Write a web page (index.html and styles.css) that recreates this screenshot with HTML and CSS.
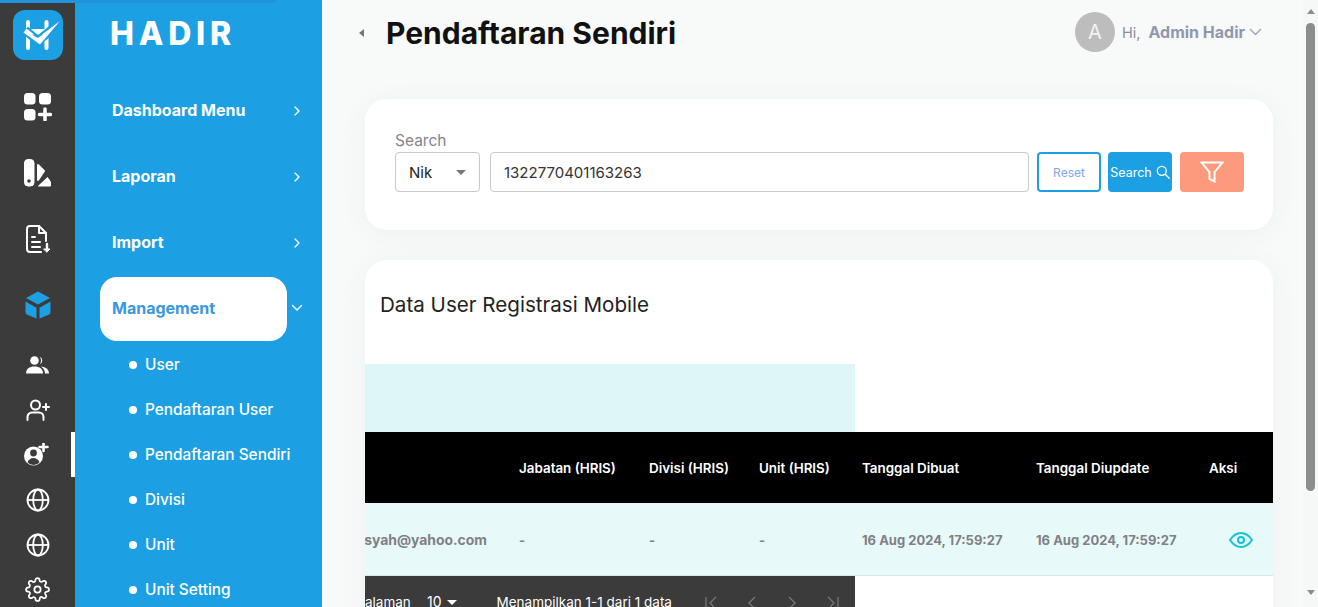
FILE: index.html
```html
<!DOCTYPE html>
<html lang="en">
<head>
  <meta charset="UTF-8">
  <title>Pendaftaran Sendiri</title>
  <link rel="stylesheet" href="styles.css">
</head>
<body>
  <div class="top-progress"></div>
  <div class="app">
    <!-- Icon rail -->
    <nav class="rail">
      <div class="rail-logo">
        <svg width="50" height="50" viewBox="0 0 50 50">
          <rect width="50" height="50" rx="12" fill="#1ca0e3"/>
          <path d="M15 12v26M33.500 12v26" stroke="#fff" stroke-width="4" stroke-linecap="round" fill="none"/>
          <path d="M15 19h18v6H15z" fill="#fff"/>
          <path d="M12 20l13 11 23-19" stroke="#1ca0e3" stroke-width="9" fill="none"/>
          <path d="M10.500 22.500l3-4 11.500 9 22-16.500-20 23.500z" fill="#fff"/>
          <path d="M19 24.500h11l-5.500 3.500z" fill="#1ca0e3"/>
        </svg>
      </div>
      <div class="rail-item tall">
        <svg width="28" height="28" viewBox="0 0 28 28" fill="#fff"><rect x="0" y="0" width="11.500" height="11.500" rx="3.500"/><rect x="15" y="0" width="12" height="11.500" rx="3.500"/><rect x="0" y="16" width="11.500" height="11.500" rx="3.500"/><path d="M21 16v11M15.500 21.500h11" stroke="#fff" stroke-width="3.500" stroke-linecap="round"/></svg>
      </div>
      <div class="rail-item tall">
        <svg width="28" height="28" viewBox="0 0 28 28" fill="#fff" stroke="#fff" stroke-linejoin="round"><rect x="0.500" y="0.500" width="9.500" height="26.500" rx="3.500"/><circle cx="5" cy="22" r="1.800" fill="#3b3b3b" stroke="none"/><path d="M14 6l6 6-6 9z" stroke-width="2"/><path d="M14.500 27l9-8.500 3 4.500v4z" stroke-width="1"/></svg>
      </div>
      <div class="rail-item tall">
        <svg width="26" height="28" viewBox="0 0 26 28" fill="none" stroke="#fff" stroke-width="2" stroke-linecap="round" stroke-linejoin="round"><path d="M14 1H5a3 3 0 0 0-3 3v20a3 3 0 0 0 3 3h11"/><path d="M14 1l7 7v8"/><path d="M14 2v6h7M7 12h3M7 17h8M7 22h8"/><path d="M22 19v6" stroke-width="2.400"/><path d="M19 24h6l-3 3z" fill="#fff" stroke-width="1"/></svg>
      </div>
      <div class="rail-item tall">
        <svg width="26" height="28" viewBox="0 0 26 28" fill="#1ca0e3"><path d="M13 .5l12 6.500-12 6.500L1 7z"/><path d="M.5 10.500l11 6.200V27.500l-8.500-3.500a3 3 0 0 1-2.500-3z"/><path d="M25.500 10.500l-11 6.200V27.500l8.500-3.500a3 3 0 0 0 2.500-3z"/></svg>
      </div>
      <div class="rail-item short">
        <svg width="23" height="18" viewBox="0 0 23 18" fill="#fff"><circle cx="8.500" cy="4.500" r="4.300"/><path d="M0 17.500c0-4.500 3.300-7 8.500-7s8.500 2.500 8.500 7z"/><path d="M13.500.5a4.300 4.300 0 0 1 0 8 6 6 0 0 0 0-8z"/><path d="M15 10.500c4.500.3 8 2.800 8 7h-4c0-3-1.500-5.300-4-7z"/></svg>
      </div>
      <div class="rail-item short">
        <svg width="24" height="22" viewBox="0 0 24 22" fill="none" stroke="#fff" stroke-width="2" stroke-linecap="round"><circle cx="9.500" cy="6" r="4.500"/><path d="M1.500 21v-3a4.500 4.500 0 0 1 4.500-4.500h7a4.500 4.500 0 0 1 4.500 4.500v3"/><path d="M20 5v6M17 8h6"/></svg>
      </div>
      <div class="rail-item short active">
        <svg width="28" height="24" viewBox="0 0 28 24"><circle cx="9.500" cy="13" r="9.500" fill="#fff"/><circle cx="9.500" cy="10" r="3.400" fill="#3b3b3b"/><path d="M3.500 19.500c1-3 3.300-4.500 6-4.500s5 1.500 6 4.500a8.500 8.500 0 0 1-12 0z" fill="#3b3b3b"/><path d="M19.500 0v8M15.500 4h8" stroke="#fff" stroke-width="2.600" stroke-linecap="round"/></svg>
      </div>
      <div class="rail-item short">
        <svg width="24" height="24" viewBox="0 0 24 24" fill="none" stroke="#fff" stroke-width="1.800"><circle cx="12" cy="12" r="10.500"/><ellipse cx="12" cy="12" rx="4.800" ry="10.500"/><path d="M1.500 12h21"/></svg>
      </div>
      <div class="rail-item short">
        <svg width="24" height="24" viewBox="0 0 24 24" fill="none" stroke="#fff" stroke-width="1.800"><circle cx="12" cy="12" r="10.500"/><ellipse cx="12" cy="12" rx="4.800" ry="10.500"/><path d="M1.500 12h21"/></svg>
      </div>
      <div class="rail-item short">
        <svg width="25" height="25" viewBox="0 0 24 24" fill="none" stroke="#fff" stroke-width="1.700" stroke-linecap="round" stroke-linejoin="round"><circle cx="12" cy="12" r="3"/><path d="M19.400 15a1.650 1.650 0 0 0 .33 1.820l.06.06a2 2 0 0 1 0 2.830 2 2 0 0 1-2.830 0l-.06-.06a1.650 1.650 0 0 0-1.820-.33 1.650 1.650 0 0 0-1 1.510V21a2 2 0 0 1-2 2 2 2 0 0 1-2-2v-.09A1.650 1.650 0 0 0 9 19.400a1.650 1.650 0 0 0-1.820.33l-.06.06a2 2 0 0 1-2.830 0 2 2 0 0 1 0-2.830l.06-.06a1.650 1.650 0 0 0 .33-1.820 1.650 1.650 0 0 0-1.510-1H3a2 2 0 0 1-2-2 2 2 0 0 1 2-2h.09A1.650 1.650 0 0 0 4.600 9a1.650 1.650 0 0 0-.33-1.820l-.06-.06a2 2 0 0 1 0-2.830 2 2 0 0 1 2.830 0l.06.06a1.650 1.650 0 0 0 1.820.33H9a1.650 1.650 0 0 0 1-1.510V3a2 2 0 0 1 2-2 2 2 0 0 1 2 2v.09a1.650 1.650 0 0 0 1 1.510 1.650 1.650 0 0 0 1.820-.33l.06-.06a2 2 0 0 1 2.830 0 2 2 0 0 1 0 2.830l-.06.06a1.650 1.650 0 0 0-.33 1.820V9a1.650 1.650 0 0 0 1.510 1H21a2 2 0 0 1 2 2 2 2 0 0 1-2 2h-.09a1.650 1.650 0 0 0-1.510 1z"/></svg>
      </div>
    </nav>

    <!-- Menu -->
    <aside class="sidebar">
      <div class="brand">HADIR</div>
      <div class="menu-item">
        <span>Dashboard Menu</span>
        <svg class="chev" width="8" height="12" viewBox="0 0 8 12"><path d="M2 2l4 4-4 4"/></svg>
      </div>
      <div class="menu-item">
        <span>Laporan</span>
        <svg class="chev" width="8" height="12" viewBox="0 0 8 12"><path d="M2 2l4 4-4 4"/></svg>
      </div>
      <div class="menu-item">
        <span>Import</span>
        <svg class="chev" width="8" height="12" viewBox="0 0 8 12"><path d="M2 2l4 4-4 4"/></svg>
      </div>
      <div class="menu-item open">
        <span class="menu-pill">Management</span>
        <svg class="chev" width="12" height="8" viewBox="0 0 12 8"><path d="M1.500 1.500L6 6l4.500-4.500"/></svg>
      </div>
      <ul class="submenu">
        <li>User</li>
        <li>Pendaftaran User</li>
        <li>Pendaftaran Sendiri</li>
        <li>Divisi</li>
        <li>Unit</li>
        <li>Unit Setting</li>
      </ul>
    </aside>

    <main class="content">
      <header class="topbar">
        <div class="collapse-arrow"></div>
        <h1 class="page-title">Pendaftaran Sendiri</h1>
        <div class="profile">
          <div class="avatar">A</div>
          <span class="hi">Hi,</span>
          <span class="profile-name">Admin Hadir</span>
          <svg class="profile-caret" width="13" height="8" viewBox="0 0 13 8"><path d="M1 1l5.500 5.500L12 1"/></svg>
        </div>
      </header>

      <section class="card search-card">
        <label class="search-label">Search</label>
        <div class="search-row">
          <div class="select">
            <span>Nik</span>
            <span class="select-caret"></span>
          </div>
          <div class="text-input">1322770401163263</div>
          <button class="btn btn-reset">Reset</button>
          <button class="btn btn-search">
            Search
            <svg width="14" height="14" viewBox="0 0 14 14" fill="none" stroke="#fff" stroke-width="1.300" stroke-linecap="round"><circle cx="5.800" cy="5.800" r="4.500"/><path d="M9.200 9.200l4 4"/></svg>
          </button>
          <button class="btn btn-filter">
            <svg width="24" height="22" viewBox="0 0 24 22" fill="none" stroke="#fff" stroke-width="2"><path d="M1.500 1.500h21l-8 9.500v9.500l-5-2.500v-7z"/></svg>
          </button>
        </div>
      </section>

      <section class="card table-card">
        <h2 class="table-title">Data User Registrasi Mobile</h2>
        <div class="teal-band"></div>
        <div class="data-row head">
          <div class="col col-email"></div>
          <div class="col col-jabatan">Jabatan (HRIS)</div>
          <div class="col col-divisi">Divisi (HRIS)</div>
          <div class="col col-unit">Unit (HRIS)</div>
          <div class="col col-date">Tanggal Dibuat</div>
          <div class="col col-date">Tanggal Diupdate</div>
          <div class="col col-aksi">Aksi</div>
        </div>
        <div class="data-row body">
          <div class="col col-email"><span>syah@yahoo.com</span></div>
          <div class="col col-jabatan">-</div>
          <div class="col col-divisi">-</div>
          <div class="col col-unit">-</div>
          <div class="col col-date">16 Aug 2024, 17:59:27</div>
          <div class="col col-date">16 Aug 2024, 17:59:27</div>
          <div class="col col-aksi">
            <svg width="24" height="16" viewBox="0 0 24 16" fill="none" stroke="#12c4d8" stroke-width="2"><path d="M1 8c3-4.500 6.500-7 11-7s8 2.500 11 7c-3 4.500-6.500 7-11 7S4 12.500 1 8z"/><circle cx="12" cy="8" r="3"/></svg>
          </div>
        </div>
        <div class="pager">
          <span class="pager-label">alaman</span>
          <span class="pager-size">10</span>
          <span class="pager-caret"></span>
          <span class="pager-info">Menampilkan 1-1 dari 1 data</span>
          <div class="pager-icons">
            <svg width="16" height="14" viewBox="0 0 16 14"><path d="M2 1v12M12 1L6 7l6 6"/></svg>
            <svg width="16" height="14" viewBox="0 0 16 14"><path d="M11 1L5 7l6 6"/></svg>
            <svg width="16" height="14" viewBox="0 0 16 14"><path d="M5 1l6 6-6 6"/></svg>
            <svg width="16" height="14" viewBox="0 0 16 14"><path d="M4 1l6 6-6 6M14 1v12"/></svg>
          </div>
        </div>
      </section>
    </main>

    <!-- Browser scrollbar -->
    <div class="scrollbar">
      <span class="scroll-up"></span>
      <div class="scroll-thumb"></div>
      <span class="scroll-down"></span>
    </div>
  </div>
</body>
</html>
```

FILE: styles.css
```css
* {
  box-sizing: border-box;
}

html, body {
  margin: 0;
  height: 100%;
  overflow: hidden;
}

body {
  font-family: "Inter", "Noto Sans", sans-serif;
  color: #222;
  background: #f8fafa;
}

.top-progress {
  position: fixed;
  top: 0;
  left: 0;
  width: 276px;
  height: 3px;
  background: #2193dc;
  z-index: 5;
}

.app {
  display: flex;
  height: 607px;
  overflow: hidden;
}

/* Icon rail */
.rail {
  flex: 0 0 75px;
  background: #3b3b3b;
  display: flex;
  flex-direction: column;
  align-items: center;
  padding-top: 10px;
  overflow: hidden;
}

.rail-logo {
  flex: none;
  height: 64px;
}

.rail-item {
  width: 100%;
  display: flex;
  align-items: center;
  justify-content: center;
  flex: none;
}

.rail-item.tall {
  height: 66px;
}

.rail-item.short {
  height: 45px;
}

.rail-item.tall + .rail-item.short {
  margin-top: 4px;
}

.rail-item.active {
  border-right: 4px solid #fff;
  padding-left: 4px;
}

/* Sidebar */
.sidebar {
  flex: 0 0 247px;
  background: #1ca0e3;
  color: #fff;
  padding-left: 25px;
}

.brand {
  height: 77px;
  padding: 15px 0 0 10px;
  font-size: 32px;
  line-height: 38px;
  font-weight: 800;
  letter-spacing: 4.800px;
}

.menu-item {
  height: 66px;
  display: flex;
  align-items: center;
  padding-left: 12px;
  font-size: 16px;
  font-weight: 700;
}

.menu-item > span {
  flex: 0 0 181px;
}

.chev {
  margin-top: 2px;
  fill: none;
  stroke: #fff;
  stroke-width: 1.300;
  stroke-linecap: round;
  stroke-linejoin: round;
}

.menu-item.open {
  padding-left: 0;
}

.menu-item.open > .menu-pill {
  flex: 0 0 187px;
  height: 64px;
  margin-top: 2px;
  padding: 0 0 2px 12px;
  display: flex;
  align-items: center;
  background: #fff;
  color: #3a97e0;
  border-radius: 17px;
}

.menu-item.open .chev {
  margin: 0 0 0 4px;
}

.submenu {
  list-style: none;
  margin: 0;
  padding: 1px 0 0 30px;
}

.submenu li {
  height: 45px;
  display: flex;
  align-items: center;
  font-size: 15.400px;
  font-weight: 500;
}

.submenu li::before {
  content: "";
  width: 8px;
  height: 8px;
  border-radius: 50%;
  background: #fff;
  margin-right: 8px;
  margin-left: -1px;
}

/* Main content */
.content {
  flex: 1;
  min-width: 0;
  padding: 0 30px 0 43px;
}

.topbar {
  height: 66px;
  display: flex;
  align-items: center;
}

.collapse-arrow {
  width: 0;
  height: 0;
  margin-left: -6px;
  border: 4px solid transparent;
  border-left: 0;
  border-right: 5px solid #777;
}

.page-title {
  margin: 0 0 0 22px;
  font-size: 30px;
  font-weight: 700;
  color: #111;
}

.profile {
  margin: 0 11px 2px auto;
  display: flex;
  align-items: center;
  color: #8f98ac;
  font-size: 16px;
}

.avatar {
  width: 40px;
  height: 40px;
  border-radius: 50%;
  background: #bdbdbd;
  color: #f3f3f3;
  font-size: 20px;
  display: flex;
  align-items: center;
  justify-content: center;
  margin-right: 7px;
}

.hi {
  color: #8d8d99;
  font-size: 14.500px;
  margin-right: 8px;
}

.profile-name {
  font-weight: 700;
}

.profile-caret {
  margin-left: 4px;
  fill: none;
  stroke: #9aa3b5;
  stroke-width: 1.300;
}

.card {
  background: #fff;
  border-radius: 22px;
  box-shadow: 0 4px 28px rgba(60, 70, 80, 0.05);
}

.search-card {
  margin-top: 33px;
  height: 131px;
  padding: 31px 29px 0 30px;
}

.search-label {
  display: block;
  font-size: 15.500px;
  line-height: 22px;
  color: #85858a;
}

.search-row {
  display: flex;
  height: 40px;
}

.select {
  width: 85px;
  border: 1px solid #c9c9c9;
  border-radius: 4px;
  display: flex;
  align-items: center;
  justify-content: space-between;
  padding: 0 13px;
  font-size: 15px;
  margin-right: 10px;
}

.select-caret {
  width: 0;
  height: 0;
  border: 5px solid transparent;
  border-bottom: 0;
  border-top: 5px solid #777;
}

.text-input {
  width: 539px;
  border: 1px solid #c9c9c9;
  border-radius: 4px;
  padding: 1px 13px 0;
  font-size: 15px;
  line-height: 38px;
  color: #333;
  margin-right: 8px;
}

.btn {
  width: 64px;
  border: 0;
  border-radius: 4px;
  padding: 0;
  font-family: inherit;
  display: flex;
  align-items: center;
  justify-content: center;
  margin-right: 7px;
}

.btn-reset {
  background: #fff;
  border: 2px solid #1ca0e3;
  color: #7fa7ea;
  font-size: 12px;
}

.btn-search {
  background: #1ca0e3;
  color: #fff;
  font-size: 12.500px;
  gap: 4px;
}

.btn-filter {
  background: #fe9a7c;
  margin-left: 1px;
  margin-right: 0;
}

.table-card {
  margin-top: 30px;
  height: 400px;
  overflow: hidden;
}

.table-title {
  margin: 0;
  padding: 31px 0 0 15px;
  height: 104px;
  font-size: 20.600px;
  line-height: 28px;
  font-weight: 400;
  color: #222;
}

.teal-band {
  width: 490px;
  height: 68px;
  background: #dff6f8;
}

.data-row {
  display: flex;
  align-items: center;
}

.data-row.head {
  height: 71px;
  padding-top: 1px;
  background: #000;
  color: #fff;
  font-size: 13.400px;
  font-weight: 600;
}

.data-row.body {
  height: 73px;
  padding-top: 1px;
  background: #e8f9fa;
  border-bottom: 1px solid #dfe3e3;
  color: #808085;
  font-size: 13px;
  font-weight: 700;
}

.col {
  flex: none;
  white-space: nowrap;
}

.col-email {
  width: 154px;
  padding-right: 32px;
  font-size: 13.900px;
  display: flex;
  justify-content: flex-end;
  overflow: hidden;
}

.col-jabatan { width: 130px; }
.col-divisi { width: 110px; }
.col-unit { width: 103px; }
.col-date { width: 174px; }

.col-date + .col-date {
  width: 173px;
}

.col-aksi {
  display: flex;
  align-items: center;
}

.data-row.body .col-aksi {
  padding-left: 20px;
}

.pager {
  width: 490px;
  height: 60px;
  background: #3b3b3b;
  color: #fff;
  font-size: 13.500px;
  display: flex;
  align-items: flex-start;
  padding-top: 17px;
  line-height: 18px;
}

.pager-label {
  width: 44px;
  white-space: nowrap;
}

.pager-size {
  margin-left: 18px;
  font-size: 14px;
}

.pager-caret {
  width: 0;
  height: 0;
  margin: 7px 0 0 5px;
  border: 5px solid transparent;
  border-bottom: 0;
  border-top: 5px solid #fff;
}

.pager-info {
  margin-left: 40px;
  white-space: nowrap;
}

.pager-icons {
  margin-left: 32px;
  display: flex;
  gap: 24px;
  padding-top: 3px;
}

.pager-icons svg {
  fill: none;
  stroke: #777;
  stroke-width: 1.300;
}

/* Scrollbar */
.scrollbar {
  flex: 0 0 15px;
  background: #f6f7f7;
  display: flex;
  flex-direction: column;
  align-items: center;
  padding-top: 9px;
}

.scroll-up {
  width: 0;
  height: 0;
  border: 4.500px solid transparent;
  border-top: 0;
  border-bottom: 5px solid #8c8c8c;
}

.scroll-thumb {
  width: 9px;
  height: 468px;
  margin-top: 9px;
  background: #8c8c8c;
  border-radius: 5px;
}

.scroll-down {
  width: 0;
  height: 0;
  margin-top: 99px;
  border: 4.500px solid transparent;
  border-bottom: 0;
  border-top: 5px solid #8c8c8c;
}
```
